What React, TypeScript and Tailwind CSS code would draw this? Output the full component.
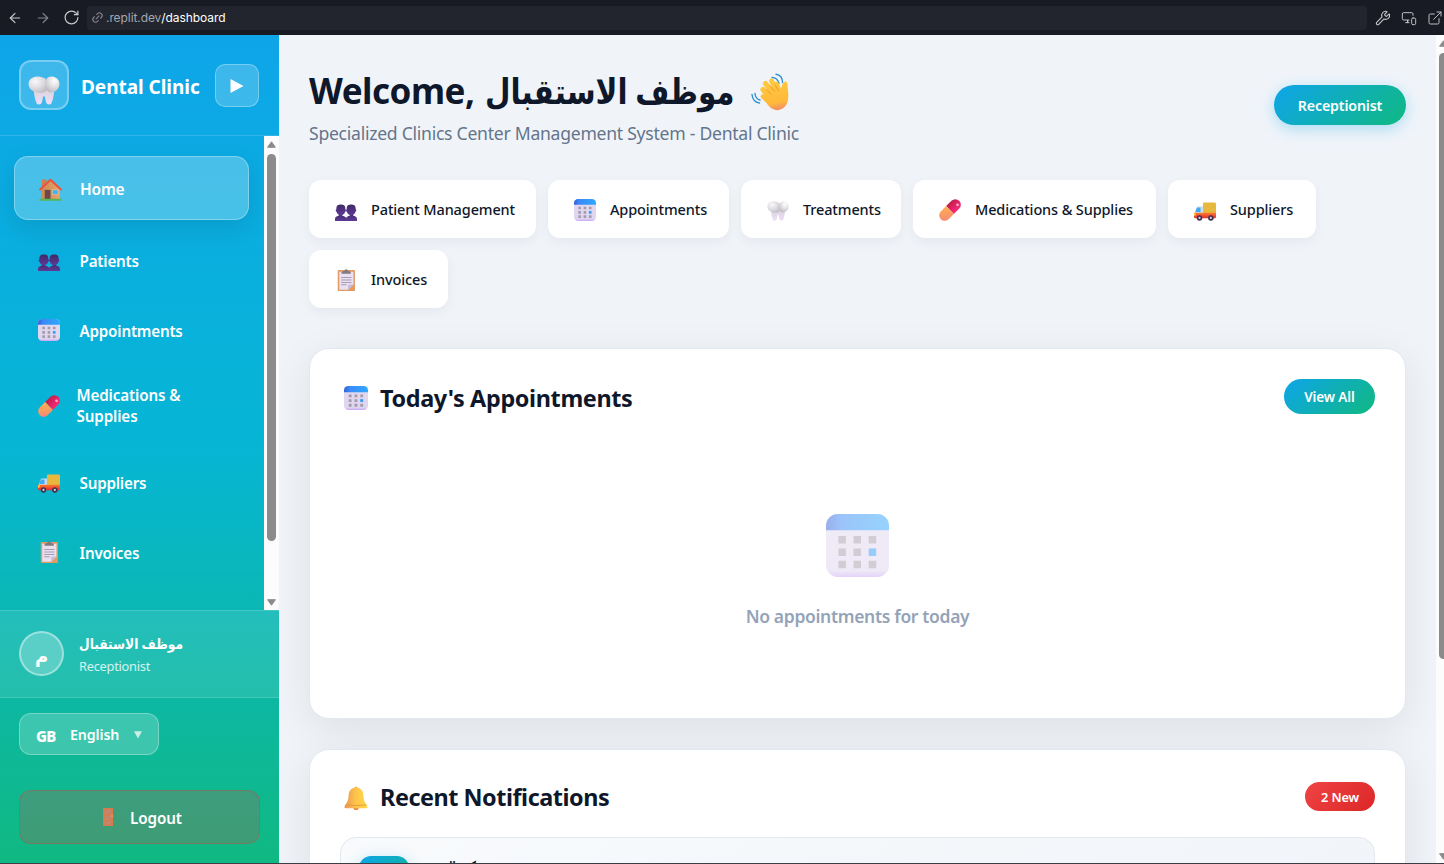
import React from "react";
import { ArrowLeft, ArrowRight, RotateCw, Link2, Wrench, MonitorSmartphone, ExternalLink } from "lucide-react";

type IconProps = { className?: string };

function Defs() {
  return (
    <svg width="0" height="0" className="absolute">
      <defs>
        <radialGradient id="toothA" cx="0.35" cy="0.3" r="0.8">
          <stop offset="0" stopColor="#f8f7f9" />
          <stop offset="0.5" stopColor="#dfdde1" />
          <stop offset="1" stopColor="#bdbac1" />
        </radialGradient>
        <radialGradient id="toothC" cx="0.65" cy="0.25" r="0.8">
          <stop offset="0" stopColor="#ffffff" />
          <stop offset="0.5" stopColor="#e2e0e4" />
          <stop offset="1" stopColor="#bcb8c0" />
        </radialGradient>
        <linearGradient id="toothB" x1="0" y1="0" x2="0" y2="1">
          <stop offset="0" stopColor="#d8d4da" />
          <stop offset="1" stopColor="#efdcfb" />
        </linearGradient>
        <linearGradient id="calTop" x1="0" y1="0" x2="1" y2="0">
          <stop offset="0" stopColor="#3560d8" />
          <stop offset="0.25" stopColor="#3a8bf7" />
          <stop offset="1" stopColor="#2fa8ff" />
        </linearGradient>
        <linearGradient id="calBody" x1="0" y1="0" x2="0" y2="1">
          <stop offset="0" stopColor="#e2d9ee" />
          <stop offset="0.9" stopColor="#e0d5f0" />
          <stop offset="1" stopColor="#cba6f5" />
        </linearGradient>
        <linearGradient id="person" x1="0" y1="0" x2="0" y2="1">
          <stop offset="0" stopColor="#3f2b63" />
          <stop offset="0.6" stopColor="#533285" />
          <stop offset="1" stopColor="#5d3c94" />
        </linearGradient>
        <linearGradient id="pillA" x1="0" y1="0" x2="1" y2="0">
          <stop offset="0" stopColor="#c21d4d" />
          <stop offset="1" stopColor="#f92a78" />
        </linearGradient>
        <linearGradient id="pillB" x1="0" y1="0" x2="1" y2="1">
          <stop offset="0" stopColor="#ffb24e" />
          <stop offset="1" stopColor="#f3837a" />
        </linearGradient>
        <linearGradient id="cab" x1="0" y1="0" x2="0" y2="1">
          <stop offset="0" stopColor="#ff7a2d" />
          <stop offset="1" stopColor="#e22c35" />
        </linearGradient>
        <linearGradient id="bell" x1="0" y1="0" x2="1" y2="0">
          <stop offset="0" stopColor="#e8955a" />
          <stop offset="0.5" stopColor="#ffc648" />
          <stop offset="1" stopColor="#ffd84f" />
        </linearGradient>
        <linearGradient id="hand" gradientUnits="userSpaceOnUse" x1="18" y1="6" x2="24" y2="38">
          <stop offset="0" stopColor="#ffca3e" />
          <stop offset="0.75" stopColor="#ffb93b" />
          <stop offset="1" stopColor="#f08a67" />
        </linearGradient>
        <linearGradient id="wall" x1="0" y1="0" x2="1" y2="0">
          <stop offset="0" stopColor="#c98a55" />
          <stop offset="1" stopColor="#eaa467" />
        </linearGradient>
      </defs>
    </svg>
  );
}

function Tooth({ className }: IconProps) {
  return (
    <svg viewBox="0 0 32 32" className={className}>
      <path d="M5 15C6.500 20 6 25 8.500 30C9.700 32.300 13.300 32 14 29C14.700 26 14.900 23 16 23C17.100 23 17.300 26 18 29C18.700 32 22.300 32.300 23.500 30C26 25 25.500 20 27 15Z" fill="url(#toothB)" />
      <path d="M9 3.500C13 3 14 5 17 5L20 12L17.500 18.800C14.500 19.500 12 20.300 9.500 19.600C4 18.500 .6 15.500 .6 11C.6 6.500 4 4 9 3.500Z" fill="url(#toothA)" />
      <path d="M24 3.500C29 4 31.800 7.500 31.400 11.800C30.800 17 26 20.300 22 19.400C18.200 18.500 16.800 14.500 17 11C17.200 6.500 19.500 3.200 24 3.500Z" fill="url(#toothC)" />
    </svg>
  );
}

function Calendar({ className }: IconProps) {
  return (
    <svg viewBox="0 0 32 32" className={className}>
      <rect width="32" height="32" rx="6" fill="url(#calBody)" />
      <path d="M0 8.200V6A6 6 0 0 1 6 0H26A6 6 0 0 1 32 6V8.200Z" fill="url(#calTop)" />
      <g fill="#a39cab">
        <path d="M6.300 11.200h3.800v3.800h-3.800zM14 11.200h3.800v3.800h-3.800zM21.700 11.200h3.800v3.800h-3.800zM6.300 17.500h3.800v3.800h-3.800zM14 17.500h3.800v3.800h-3.800zM6.300 23.800h3.800v3.800h-3.800zM14 23.800h3.800v3.800h-3.800zM21.700 23.800h3.800v3.800h-3.800z" />
      </g>
      <path d="M21.700 17.500h3.800v3.800h-3.800z" fill="#2f9bf7" />
    </svg>
  );
}

function People({ className }: IconProps) {
  return (
    <svg viewBox="0 -3 32 32" className={className}>
      <path d="M16 29.500V26C16 23 19 22 21.500 21.500V17H26.500V21.500C29 22 32 23 32 26V29.500Z" fill="url(#person)" />
      <path d="M0 29.500V26C0 23 3 22 5.500 21.500V17H10.500V21.500C13 22 16.500 23 16.500 26V29.500Z" fill="url(#person)" />
      <path d="M2 10.500C2 6.500 4.500 5 8.500 5S15 6.500 15 10.500V12C16.300 12 16.300 15.500 14.800 15.500C14 18.500 11.500 20.500 8.500 20.500S3 18.500 2.200 15.500C.7 15.500 .7 12 2 12Z" fill="url(#person)" />
      <path d="M17 10.500C17 6.500 19.500 5 23.500 5S30 6.500 30 10.500V12C31.300 12 31.300 15.500 29.800 15.500C29 18.500 26.500 20.500 23.500 20.500S18 18.500 17.200 15.500C15.700 15.500 15.700 12 17 12Z" fill="url(#person)" />
    </svg>
  );
}

function Pill({ className }: IconProps) {
  return (
    <svg viewBox="0 0 32 32" className={className}>
      <g transform="rotate(45 16 16)">
        <path d="M8 16V5A8 8 0 0 1 24 5V16Z" fill="url(#pillA)" />
        <path d="M8 16V27A8 8 0 0 0 24 27V16Z" fill="url(#pillB)" />
      </g>
      <circle cx="27" cy="8.500" r="2" fill="#ffa9cc" />
    </svg>
  );
}

function Truck({ className }: IconProps) {
  return (
    <svg viewBox="0 -2 32 32" className={className}>
      <path d="M13 18.500V5A2 2 0 0 1 15 3H30A2 2 0 0 1 32 5V18.500Z" fill="#e6b93e" />
      <path d="M1 18.500L3.500 11A3 3 0 0 1 6.300 9H13V18.500Z" fill="#cfdcf0" />
      <path d="M1.800 17L3.800 11.500A2 2 0 0 1 5.600 10.500H9.500V17Z" fill="#3faaf5" />
      <path d="M0 18H32V24A2 2 0 0 1 30 26H2A2 2 0 0 1 0 24Z" fill="url(#cab)" />
      <rect x="0" y="19" width="2.500" height="3" fill="#ffd84f" />
      <circle cx="8" cy="25.500" r="4" fill="#43304d" />
      <circle cx="8" cy="25.500" r="1.600" fill="#d9cfe0" />
      <circle cx="24.500" cy="25.500" r="4" fill="#43304d" />
      <circle cx="24.500" cy="25.500" r="1.600" fill="#d9cfe0" />
    </svg>
  );
}

function Clipboard({ className }: IconProps) {
  return (
    <svg viewBox="0 0 32 32" className={className}>
      <rect x="4" y="1.500" width="25" height="30.500" rx="1" fill="#e29a63" />
      <path d="M6.200 4H26.800V22.500L19 30H6.200Z" fill="#e9e0f2" />
      <path d="M19 30V23.500L20.500 22.500H26.800Z" fill="#c9bbdc" />
      <path d="M9.500 7V5.200Q9.500 3.500 11 3.300L13.500 2.800Q14 .3 16.300 .3T19 2.800L21.300 3.300Q23 3.500 23 5.200V7Z" fill="#84797f" />
      <path d="M9 12.500H24M9 16H24M9 19.500H24M9 23H17" stroke="#a79cb2" strokeWidth="1.500" />
    </svg>
  );
}

function House({ className }: IconProps) {
  return (
    <svg viewBox="0 0 32 32" className={className}>
      <rect x="4" y="2" width="6.500" height="12" fill="#c9824e" />
      <path d="M4 14.500L16 3.500L29 15V30H4Z" fill="url(#wall)" />
      <path d="M1.500 16L16 2.500L30.500 16" fill="none" stroke="#ef4f3c" strokeWidth="2.600" strokeLinecap="round" strokeLinejoin="round" />
      <rect x="8" y="16.500" width="8" height="13.500" fill="#6e4748" />
      <rect x="18.500" y="16.500" width="8" height="6.500" fill="#3db4f5" stroke="#f2c79a" strokeWidth="0.800" />
      <rect x="0.500" y="29" width="31" height="2.500" rx="1.200" fill="#57b556" />
    </svg>
  );
}

function Bell({ className }: IconProps) {
  return (
    <svg viewBox="0 0 32 32" className={className}>
      <circle cx="16" cy="28.500" r="3.500" fill="#e8853f" />
      <circle cx="16" cy="2.500" r="2" fill="#f0a44a" />
      <path d="M16 2C22 2 25.500 6.500 25.800 12C26 18 27 21 30.500 25.500C32 27.500 31.500 29.500 29.500 29.500H2.500C.5 29.500 0 27.500 1.500 25.500C5 21 6 18 6.200 12C6.500 6.500 10 2 16 2Z" fill="url(#bell)" />
      <path d="M2.500 25.200Q16 27 29.500 25.200" fill="none" stroke="#e39a38" strokeWidth="1.200" />
    </svg>
  );
}

function WavingHand({ className }: IconProps) {
  return (
    <svg viewBox="0 0 38 38" className={className}>
      <g fill="none" stroke="#2f8fd0" strokeWidth="1.400" strokeLinecap="round">
        <path d="M21 4.500C24.500 4.500 27 6.500 28 10.500" />
        <path d="M25 1.200C29 1.800 31.500 5 31.500 9.500" />
        <path d="M4 20.500C4.300 24 6.500 26.500 9 27" />
        <path d="M1 21.500C1.500 26.500 4.500 29.500 8.500 30" />
      </g>
      <g fill="none" stroke="url(#hand)" strokeLinecap="round">
        <path d="M12 16.500L21 27" strokeWidth="5.200" />
        <path d="M14.500 10.500L24 23" strokeWidth="5.200" />
        <path d="M20.500 8L27 21" strokeWidth="5" />
        <path d="M25.500 11L30 21" strokeWidth="4.600" />
        <path d="M12 23.500L20 31" strokeWidth="4.600" />
      </g>
      <path d="M14.500 20L24 12L30 15.500C31 12 32 8.500 34.500 8.500C37 8.500 36.500 12 37 17C37.700 25 37.500 30 33.500 34C28 39.200 21 37.500 17 32L13 26Z" fill="url(#hand)" />
      <path d="M15.500 16.500L20 21.500M19 12.500L23.500 18.500M24.500 12.500L27.500 18" stroke="#e98f35" strokeWidth="0.800" strokeLinecap="round" />
    </svg>
  );
}

function Door({ className }: IconProps) {
  return (
    <svg viewBox="0 0 10 18" className={className}>
      <rect width="10" height="18" fill="#d87a4e" />
      <path d="M1.500 1.500h6.500v5h-6.500zM1.500 8h6.500v4h-6.500zM1.500 13.300h6.500v3.500h-6.500z" fill="#c68568" />
      <circle cx="9" cy="8" r="0.800" fill="#f5c242" />
    </svg>
  );
}

function UpArrow({ className }: IconProps) {
  return (
    <svg viewBox="0 0 9 7" className={className}>
      <path d="M4.500 .8L8.400 6.300H.6Z" fill="#8b8b8b" stroke="#8b8b8b" strokeLinejoin="round" />
    </svg>
  );
}

function NavItem({ icon, label }: { icon: React.ReactNode; label: string }) {
  return (
    <a className="flex h-16 items-center pl-[22px] text-[15.200px] font-semibold tracking-[-0.200px] text-white">
      <span className="w-[41.500px]">{icon}</span>
      <span className="mt-0.5">{label}</span>
    </a>
  );
}

function Chip({ icon, label, className }: { icon: React.ReactNode; label: string; className: string }) {
  return (
    <button className={"flex h-[58px] items-center rounded-xl bg-white pt-0.5 pl-[26px] text-[14.500px] font-medium tracking-[-0.130px] whitespace-nowrap text-[#0f172a] shadow-[0_4px_12px_rgba(15,23,42,0.05)] " + className}>
      {icon}
      <span className="ml-[14px]">{label}</span>
    </button>
  );
}

export default function App() {
  return (
    <div className="flex h-[864px] w-[1444px] flex-col overflow-hidden border-b border-[#3c3d45] bg-[#f0f4f9] font-['Noto_Sans','DejaVu_Sans',sans-serif]">
      <Defs />
      <header className="flex h-[35px] shrink-0 items-center bg-[#191b24] text-[#c8cad0]">
        <ArrowLeft className="ml-[7px] size-4 shrink-0" strokeWidth={1.7} />
        <ArrowRight className="ml-3 size-4 shrink-0 text-[#858790]" strokeWidth={1.7} />
        <RotateCw className="ml-3 size-[17px] shrink-0" strokeWidth={1.7} />
        <div className="ml-[7px] flex h-6 w-[1280px] items-center rounded bg-[#22252e] pl-1 font-['Inter',sans-serif] text-[12px] tracking-[-0.080px]">
          <Link2 className="mr-[2px] size-[13px] -rotate-45 text-[#858790]" strokeWidth={2} />
          <span className="text-[#a4a7b0]">.replit.dev</span>
          <span className="text-white">/dashboard</span>
        </div>
        <Wrench className="ml-2 size-4 shrink-0" strokeWidth={1.6} />
        <MonitorSmartphone className="ml-[10px] size-4 shrink-0" strokeWidth={1.4} />
        <ExternalLink className="ml-[10px] size-4 shrink-0" strokeWidth={1.4} />
      </header>

      <div className="flex min-h-0 flex-1">
        <aside className="flex w-[279px] shrink-0 flex-col bg-[linear-gradient(180deg,#0ea5e9_0%,#06b6d4_50%,#10b981_100%)] text-white">
          <div className="flex h-[101px] shrink-0 items-center border-b border-white/15 px-[19px]">
            <div className="flex size-[50px] items-center justify-center rounded-xl border-2 border-white/30 bg-white/20">
              <Tooth className="mt-2 size-8" />
            </div>
            <h1 className="mt-[4px] ml-3 w-[134px] text-[19px] font-bold tracking-[-0.040px] whitespace-nowrap">Dental Clinic</h1>
            <button className="flex h-[43px] w-11 items-center justify-center rounded-[10px] border border-white/30 bg-white/20">
              <svg viewBox="0 0 14 14" className="mt-px size-[14px]"><path d="M.5 0L13.500 7L.5 14Z" fill="#fff" /></svg>
            </button>
          </div>

          <div className="flex h-[474px] shrink-0">
            <nav className="flex w-[264px] flex-col gap-1.5 overflow-hidden pt-5 pl-4">
              <a className="mb-0.5 -ml-0.5 flex h-16 w-[235px] shrink-0 items-center rounded-[14px] border border-white/30 bg-white/25 pt-0.5 pl-6 text-[15.500px] font-semibold tracking-[-0.200px] shadow-[0_8px_24px_rgba(0,0,0,0.1)]">
                <span className="w-[41px]"><House className="size-[23px]" /></span>
                <span className="mt-px">Home</span>
              </a>
              <NavItem icon={<People className="size-[22px]" />} label="Patients" />
              <NavItem icon={<Calendar className="size-[22px]" />} label="Appointments" />
              <a className="flex h-[76px] items-center pl-[22px] text-[15.200px] leading-[21px] font-semibold tracking-[-0.130px]">
                <span className="w-[38.500px]"><Pill className="size-[22px]" /></span>
                <span className="w-[120px]">Medications &amp; Supplies</span>
              </a>
              <NavItem icon={<Truck className="size-[22px]" />} label="Suppliers" />
              <NavItem icon={<Clipboard className="size-[22px]" />} label="Invoices" />
            </nav>
            <div className="flex w-[15px] flex-col items-center bg-[#fcfcfc] pt-[5px] pb-1">
              <UpArrow className="h-[7px] w-[9px]" />
              <div className="mt-1.5 h-[387px] w-[9px] rounded-full bg-[#8b8b8b]" />
              <UpArrow className="mt-auto h-[7px] w-[9px] rotate-180" />
            </div>
          </div>

          <div className="flex h-[88px] shrink-0 items-center border-y border-white/15 bg-white/10 px-[19px] pb-0.5">
            <div className="flex size-[45px] items-center justify-center rounded-full border-2 border-white/40 bg-white/25 pt-1.5 text-[18px] font-bold">م</div>
            <div className="ml-[15px] pt-[3px]">
              <div className="w-[104px] origin-left scale-x-[0.875] text-[14px] leading-[22px] font-semibold whitespace-nowrap">موظف الاستقبال</div>
              <div className="text-[12.800px] leading-[22px] tracking-[-0.250px] text-white/80">Receptionist</div>
            </div>
          </div>
          <div className="px-[19px] pt-[15px]">
            <button className="flex h-[42px] w-[140px] items-center rounded-xl border border-white/30 bg-white/20 pt-px pl-4 text-left text-[14.200px] font-semibold tracking-[-0.100px]">
              <span className="mt-1 w-[34px] text-[15px] font-extrabold tracking-[-0.700px]">GB</span>
              <span>English</span>
              <svg viewBox="0 0 8 8" className="ml-[15px] size-2"><path d="M0 .3H8L4 7.500Z" fill="#c9efe6" /></svg>
            </button>
            <button className="mt-[35px] flex h-[54px] w-[241px] items-center justify-center gap-[17px] rounded-xl border border-red-500/30 bg-red-500/20 pt-0.5 pl-[6px] text-[15.200px] font-semibold tracking-[-0.100px]">
              <Door className="h-[18px] w-[10px] -translate-y-px" />
              <span>Logout</span>
            </button>
          </div>
        </aside>

        <main className="min-w-0 flex-1 overflow-hidden px-[30px] pt-[35px]">
          <div className="flex h-[110px] justify-between">
            <div>
              <h2 className="flex h-[42px] items-center text-[35px] font-bold whitespace-nowrap text-[#0f172a]">
                <span className="tracking-[-0.500px]">Welcome,</span>
                <span className="ml-[11px] w-[249px] origin-left scale-x-[0.84]">موظف الاستقبال</span>
                <WavingHand className="mt-px ml-[17px] size-[38px]" />
              </h2>
              <p className="mt-2 text-[17.600px] leading-[26px] tracking-[-0.270px] whitespace-nowrap text-[#64748b]">Specialized Clinics Center Management System - Dental Clinic</p>
            </div>
            <div className="mt-[15px] flex h-10 w-[132px] items-center justify-center rounded-full bg-[linear-gradient(135deg,#0ea5e9,#10b981)] pt-px text-[14.200px] font-semibold tracking-[-0.150px] text-white shadow-[0_4px_15px_rgba(14,165,233,0.3)]">Receptionist</div>
          </div>

          <div className="flex flex-wrap gap-3">
            <Chip className="w-[227px]" icon={<People className="size-[22px]" />} label="Patient Management" />
            <Chip className="w-[181px]" icon={<Calendar className="size-[22px]" />} label="Appointments" />
            <Chip className="w-[160px]" icon={<Tooth className="size-[22px]" />} label="Treatments" />
            <Chip className="w-[243px]" icon={<Pill className="size-[22px]" />} label="Medications & Supplies" />
            <Chip className="w-[148px]" icon={<Truck className="size-[22px]" />} label="Suppliers" />
            <Chip className="w-[139px]" icon={<Clipboard className="size-[22px]" />} label="Invoices" />
          </div>

          <section className="mt-10 h-[371px] rounded-[20px] border border-[#e2e8f0] bg-white px-[30px] pt-[30px] shadow-[0_10px_40px_rgba(0,0,0,0.08)]">
            <div className="flex justify-between">
              <h3 className="ml-1 flex h-[38px] items-center text-[23.400px] font-bold tracking-[-0.350px] text-[#0f172a]">
                <Calendar className="mr-3 size-6" />
                <span className="mt-px">Today's Appointments</span>
              </h3>
              <button className="h-[35px] w-[91px] rounded-full bg-[linear-gradient(135deg,#0ea5e9,#10b981)] pt-0.5 text-[13.500px] font-semibold tracking-[-0.100px] text-white">View All</button>
            </div>
            <div className="mt-[97px] flex flex-col items-center">
              <Calendar className="size-[63px] opacity-50" />
              <p className="mt-[26px] text-[17.500px] leading-[26px] font-semibold tracking-[-0.330px] text-[#94a3b8]">No appointments for today</p>
            </div>
          </section>

          <section className="mt-[30px] h-[300px] rounded-[20px] border border-[#e2e8f0] bg-white px-[30px] pt-[30px] shadow-[0_10px_40px_rgba(0,0,0,0.08)]">
            <div className="flex justify-between">
              <h3 className="ml-1 flex h-[34px] items-center pt-0.5 text-[23.400px] font-bold tracking-[-0.460px] text-[#0f172a]">
                <Bell className="mr-3 size-6" />
                Recent Notifications
              </h3>
              <span className="mt-[2px] flex h-[29px] w-[70px] items-center justify-center rounded-full bg-[linear-gradient(135deg,#ef4444,#dc2626)] pt-0.5 text-[12.800px] font-semibold tracking-[-0.150px] text-white">2 New</span>
            </div>
            <div className="mt-[23px] flex h-[100px] rounded-2xl border border-[#e2e8f0] bg-[linear-gradient(135deg,#f8fafc,#f1f5f9)] px-[18px] pt-[18px]">
              <div className="size-[50px] rounded-xl bg-[linear-gradient(135deg,#0ea5e9,#10b981)] shadow-[0_4px_15px_rgba(14,165,233,0.3)]" />
              <div className="ml-[17px] w-[60px] origin-left scale-x-[0.6] text-[15px] leading-[20px] font-bold whitespace-nowrap text-[#0f172a]">تذكير بالموعد</div>
            </div>
          </section>
        </main>

        <div className="flex w-2 shrink-0 flex-col overflow-hidden bg-[#fcfcfc] pt-[5px] pb-[3px] pl-[3px]">
          <UpArrow className="h-[7px] w-[9px] shrink-0" />
          <div className="mt-1.5 h-[606px] w-[9px] shrink-0 rounded-full bg-[#8b8b8b]" />
          <UpArrow className="mt-auto h-[7px] w-[9px] shrink-0 rotate-180" />
        </div>
      </div>
    </div>
  );
}
